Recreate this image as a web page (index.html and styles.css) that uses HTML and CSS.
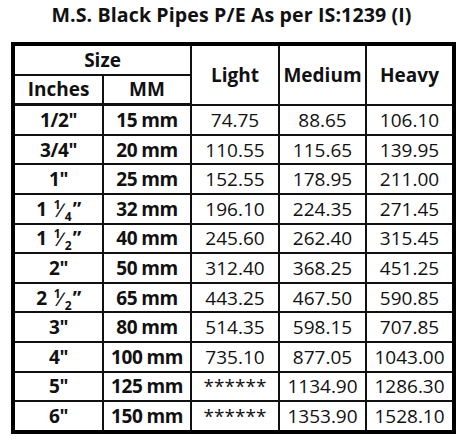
FILE: index.html
```html
<!DOCTYPE html>
<html>
<head>
<meta charset="utf-8">
<link rel="stylesheet" href="styles.css">
</head>
<body>
<div class="page">
  <h1 class="title">M.S. Black Pipes P/E As per IS:1239 (I)</h1>
  <table class="pipes">
    <colgroup>
      <col class="c-in"><col class="c-mm"><col class="c-l"><col class="c-m"><col class="c-h">
    </colgroup>
    <thead>
      <tr><th colspan="2">Size</th><th rowspan="2">Light</th><th rowspan="2">Medium</th><th rowspan="2">Heavy</th></tr>
      <tr class="sub"><th>Inches</th><th>MM</th></tr>
    </thead>
    <tbody>
      <tr><th>1/2"</th><th>15 mm</th><td>74.75</td><td>88.65</td><td>106.10</td></tr>
      <tr><th>3/4"</th><th>20 mm</th><td>110.55</td><td>115.65</td><td>139.95</td></tr>
      <tr><th>1"</th><th>25 mm</th><td>152.55</td><td>178.95</td><td>211.00</td></tr>
      <tr><th>1 <span class="frac"><span class="num">1</span><span class="sl">/</span><span class="den">4</span></span>”</th><th>32 mm</th><td>196.10</td><td>224.35</td><td>271.45</td></tr>
      <tr><th>1 <span class="frac"><span class="num">1</span><span class="sl">/</span><span class="den">2</span></span>”</th><th>40 mm</th><td>245.60</td><td>262.40</td><td>315.45</td></tr>
      <tr><th>2"</th><th>50 mm</th><td>312.40</td><td>368.25</td><td>451.25</td></tr>
      <tr><th>2 <span class="frac"><span class="num">1</span><span class="sl">/</span><span class="den">2</span></span>”</th><th>65 mm</th><td>443.25</td><td>467.50</td><td>590.85</td></tr>
      <tr><th>3"</th><th>80 mm</th><td>514.35</td><td>598.15</td><td>707.85</td></tr>
      <tr><th>4"</th><th>100 mm</th><td>735.10</td><td>877.05</td><td>1043.00</td></tr>
      <tr><th>5"</th><th>125 mm</th><td class="stars">******</td><td>1134.90</td><td>1286.30</td></tr>
      <tr><th>6"</th><th>150 mm</th><td class="stars">******</td><td>1353.90</td><td>1528.10</td></tr>
    </tbody>
  </table>
</div>
</body>
</html>
```
FILE: styles.css
```css
html, body {
  margin: 0;
  padding: 0;
  background: #fff;
}
.page {
  width: 460px;
  padding: 0 0 0 11px;
  box-sizing: border-box;
  font-family: "Open Sans", "Noto Sans", sans-serif;
  color: #111;
}
.title {
  margin: 0;
  width: 441px;
  height: 42px;
  box-sizing: border-box;
  padding-top: 1px;
  text-align: center;
  font-size: 19.6px;
  font-weight: 700;
  line-height: 28px;
  letter-spacing: 0.1px;
}
.pipes {
  border-collapse: collapse;
  table-layout: fixed;
  width: 441px;
  border: 4px solid #000;
}
.c-in { width: 90px; }
.c-mm { width: 88px; }
.c-l { width: 88px; }
.c-m { width: 87px; }
.c-h { width: 88px; }
.pipes th, .pipes td {
  border: 2px solid #111;
  height: 27.6px;
  padding: 0;
  text-align: center;
  vertical-align: middle;
  font-size: 19px;
  line-height: 24px;
  white-space: nowrap;
}
.pipes th { font-weight: 700; }
.pipes tbody th { letter-spacing: -0.4px; word-spacing: -0.5px; }
.pipes td { font-weight: 400; }
.pipes thead tr.sub th { border-bottom-width: 3px; }
.frac {
  display: inline-block;
  position: relative;
  width: 21px;
  height: 20px;
  vertical-align: -5px;
  margin-left: 1px;
}
.frac .num, .frac .den {
  position: absolute;
  font-size: 12px;
  line-height: 12px;
  font-weight: 700;
}
.frac .num { left: 2px; top: -2px; }
.frac .den { left: 13px; top: 10px; }
.frac .sl {
  position: absolute;
  left: 5px;
  top: -1px;
  font-size: 19px;
  line-height: 20px;
  font-weight: 400;
  transform: skewX(-15deg);
}
.stars { font-size: 16px; vertical-align: top; padding-top: 3px; }
```
